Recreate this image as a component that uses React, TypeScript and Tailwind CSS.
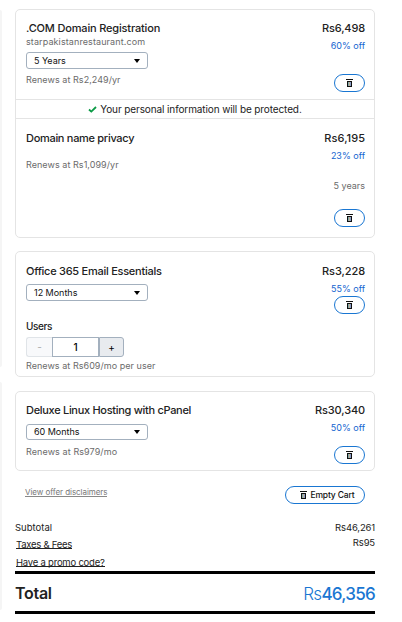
import type { ReactNode } from "react";

function Trash() {
  return (
    <svg width="7" height="8" viewBox="0 0 7 8" fill="none" shapeRendering="crispEdges" className="shrink-0">
      <path d="M0 0h7v1H0z" fill="#111" />
      <path d="M1 2h5v6H1z" fill="#111" />
      <path d="M2 3h1v4H2z" fill="#7fa9a8" />
      <path d="M3 3h1v4H3z" fill="#c0ad9c" />
      <path d="M4 3h1v4H4z" fill="#8b9dc5" />
    </svg>
  );
}

function Remove({ className }: { className: string }) {
  return (
    <button aria-label="Remove" className={`flex h-[18px] w-[31px] items-center justify-center rounded-full border border-[#1976d2] ${className}`}>
      <Trash />
    </button>
  );
}

function Title({ children, className }: { children: ReactNode; className: string }) {
  return <h2 className={`h-4 whitespace-nowrap text-[11px] font-medium leading-4 text-[#222] ${className}`}>{children}</h2>;
}

function Price({ children, className }: { children: ReactNode; className: string }) {
  return <div className={`h-4 whitespace-nowrap text-[11px] font-medium leading-4 text-[#222] ${className}`}>{children}</div>;
}

function Off({ children, className }: { children: ReactNode; className: string }) {
  return <div className={`h-3 text-[9px] leading-3 text-[#1565d0] ${className}`}>{children}</div>;
}

function Note({ children, className }: { children: ReactNode; className: string }) {
  return <div className={`h-3 whitespace-nowrap text-[9px] leading-3 text-[#6b6b6b] ${className}`}>{children}</div>;
}

function Term({ children, className }: { children: ReactNode; className: string }) {
  return (
    <div className={`flex w-[122px] items-center justify-between rounded-[3px] border border-[#a3b0be] pl-[7px] pr-[7px] text-[9px] tracking-[-0.02px] text-[#111] ${className}`}>
      <span>{children}</span>
      <svg width="6" height="4" viewBox="0 0 6 4">
        <path d="M0 0h6L3 4z" fill="#000" />
      </svg>
    </div>
  );
}

export default function App() {
  return (
    <div className="flex h-[622px] w-[402px] overflow-hidden bg-white font-['Inter',sans-serif]">
      <div className="flex w-[2px] shrink-0 flex-col pt-[10px]">
        <div className="h-[357px] rounded-r-[2px] bg-[#f5f5f5]" />
        <div className="mt-[15px] h-[228px] rounded-r-[2px] bg-[#f5f5f5]" />
      </div>
      <main className="ml-[13px] flex w-[360px] flex-col pt-[9px]">
        <section className="h-[229px] rounded-[5px] border border-[#e4e4e4]">
          <div className="flex h-[90px] justify-between border-b border-[#e4e4e4] pl-[10px] pr-[9px] pt-[10px]">
            <div>
              <Title className="tracking-[-0.17px]">.COM Domain Registration</Title>
              <Note className="tracking-[0.1px]">starpakistanrestaurant.com</Note>
              <Term className="mt-1 h-[17px]">5 Years</Term>
              <Note className="mt-[5px] tracking-[0.05px]">Renews at Rs2,249/yr</Note>
            </div>
            <div className="flex flex-col items-end">
              <Price className="tracking-[-0.14px]">Rs6,498</Price>
              <Off className="mt-1">60% off</Off>
              <Remove className="mt-[22px]" />
            </div>
          </div>
          <div className="flex h-[19px] items-center justify-center gap-[3px] border-b border-[#e4e4e4] pt-px text-[10px] tracking-[-0.11px] text-[#222]">
            <svg width="9" height="7" viewBox="0 0 9 7" fill="none">
              <path d="M1 3.5 3.3 5.6 8 1" stroke="#0a9a45" strokeWidth="1.8" />
            </svg>
            <span>Your personal information will be protected.</span>
          </div>
          <div className="flex justify-between pl-[10px] pr-[9px] pt-[11px]">
            <div>
              <Title className="tracking-[-0.3px]">Domain name privacy</Title>
              <Note className="mt-[13px] tracking-[0.05px]">Renews at Rs1,099/yr</Note>
            </div>
            <div className="flex flex-col items-end">
              <Price className="tracking-[0.05px]">Rs6,195</Price>
              <Off className="mt-1">23% off</Off>
              <Note className="mt-[18px]">5 years</Note>
              <Remove className="mt-[17px]" />
            </div>
          </div>
        </section>

        <section className="mt-[13px] flex h-[126px] justify-between rounded-[5px] border border-[#e4e4e4] pl-[10px] pr-[9px] pt-[11px]">
          <div>
            <Title className="tracking-[-0.26px]">Office 365 Email Essentials</Title>
            <Term className="mt-[5px] h-[17px]">12 Months</Term>
            <div className="mt-[19px] h-3 text-[10px] font-medium leading-3 tracking-[-0.4px] text-[#222]">Users</div>
            <div className="mt-[5px] flex h-5 w-[98px] text-[10px] leading-[18px]">
              <button className="w-[26px] rounded-l-[3px] border border-r-0 border-[#e0e4e8] bg-[#f8f9fb] text-[#aaa]">-</button>
              <div className="w-[47px] border border-[#a3b0be] text-center font-medium text-black">1</div>
              <button className="w-[25px] rounded-r-[3px] border border-[#a3b0be] bg-[#e8ebef] text-black">+</button>
            </div>
            <Note className="mt-[3px] tracking-[0.04px]">Renews at Rs609/mo per user</Note>
          </div>
          <div className="flex flex-col items-end">
            <Price className="tracking-[-0.08px]">Rs3,228</Price>
            <Off className="mt-1">55% off</Off>
            <Remove className="mt-px" />
          </div>
        </section>

        <section className="mt-[14px] flex h-20 justify-between rounded-[5px] border border-[#e4e4e4] pl-[10px] pr-[9px] pt-[10px]">
          <div>
            <Title className="tracking-[-0.3px]">Deluxe Linux Hosting with cPanel</Title>
            <Term className="mt-[6px] h-4">60 Months</Term>
            <Note className="mt-[6px] tracking-[0.09px]">Renews at Rs979/mo</Note>
          </div>
          <div className="flex flex-col items-end">
            <Price className="tracking-[-0.14px]">Rs30,340</Price>
            <Off className="mt-1">50% off</Off>
            <Remove className="mt-3" />
          </div>
        </section>

        <div className="mt-[15px] flex h-[18px] justify-between pl-[10px] pr-[10px]">
          <a className="h-[11px] whitespace-nowrap border-b border-[#888] text-[8px] leading-[13px] tracking-[-0.06px] text-[#777]">View offer disclaimers</a>
          <button className="flex h-[18px] w-20 items-center justify-center gap-[3px] rounded-full border border-[#1976d2] pl-[5px] text-[8.5px] font-medium tracking-[-0.15px] text-[#111]">
            <Trash />
            Empty Cart
          </button>
        </div>

        <div className="mt-[17px] flex h-[50px] justify-between text-[9.5px] leading-[13px] text-[#222]">
          <div className="flex flex-col items-start">
            <div className="h-3 leading-[14px]">Subtotal</div>
            <a className="ml-px mt-[5px] h-[11px] border-b border-[#222] tracking-[-0.25px]">Taxes &amp; Fees</a>
            <a className="ml-px mt-[7px] h-[11px] border-b border-[#222] tracking-[-0.22px]">Have a promo code?</a>
          </div>
          <div className="text-right leading-[14px]">
            <div className="h-3 tracking-[-0.15px]">Rs46,261</div>
            <div className="mt-[3px] h-3 tracking-[-0.15px]">Rs95</div>
          </div>
        </div>
        <div className="flex h-[43px] items-center justify-between border-y-[3px] border-black">
          <span className="text-[16px] font-semibold tracking-[-0.3px] text-[#222]">Total</span>
          <span className="pt-[5px] text-[17px] tracking-[-0.72px] text-[#1976d2]">
            <span className="font-light">Rs</span>
            <span className="font-medium">46,356</span>
          </span>
        </div>
      </main>
    </div>
  );
}
